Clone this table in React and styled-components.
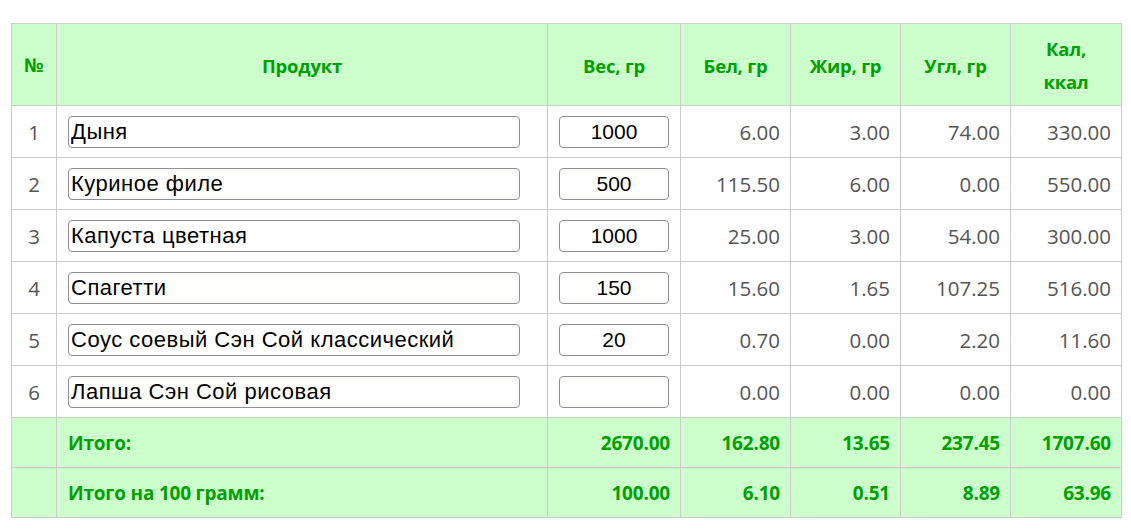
import React from 'react';
import styled, { createGlobalStyle } from 'styled-components';

const GlobalStyle = createGlobalStyle`
  body {
    margin: 0;
    background: #fff;
    font-family: "Open Sans", "Liberation Sans", sans-serif;
  }
`;

const Page = styled.div`
  padding: 23px 10px 0 11px;
`;

const Table = styled.table`
  border-collapse: collapse;
  table-layout: fixed;
  width: 1110px;
  font-size: 20.5px;
`;

const Col = styled.col`
  width: ${(p) => p.w}px;
`;

const HeadCell = styled.th`
  background: #ccffcc;
  color: #00a000;
  border: 1px solid #cccccc;
  font-size: 18.5px;
  font-weight: 700;
  line-height: 33px;
  padding: 8px ${(p) => (p.$wrap ? 22 : 8)}px 7px;
  text-align: center;
  vertical-align: middle;
  letter-spacing: -0.2px;
`;

const NumHead = styled(HeadCell)`
  padding-left: 0;
  padding-right: 0;
  font-size: 19px;
`;

const Row = styled.tr`
  height: 52px;
`;

const Cell = styled.td`
  border: 1px solid #cccccc;
  color: #555;
  padding: 0 10px;
  text-align: ${(p) => p.align || 'right'};
  vertical-align: middle;
`;

const InputCell = styled.td`
  border: 1px solid #cccccc;
  padding: 0 11px;
  vertical-align: middle;
`;

const TextInput = styled.input`
  display: block;
  box-sizing: border-box;
  width: ${(p) => p.w}px;
  height: 32px;
  margin: 0;
  padding: 0 2px;
  border: 1px solid #8f8f9d;
  border-radius: 4px;
  background: #fff;
  font-family: "Liberation Sans", Arial, sans-serif;
  font-size: ${(p) => p.size}px;
  letter-spacing: ${(p) => p.spacing || 0}px;
  color: #000;
  text-align: ${(p) => p.align || 'left'};
  outline: none;
`;

const TotalRow = styled.tr`
  height: 50px;
  background: #ccffcc;
`;

const TotalCell = styled.td`
  border: 1px solid #cccccc;
  color: #00a000;
  font-weight: 700;
  font-size: 19px;
  padding: 0 10px;
  text-align: ${(p) => p.align || 'right'};
  letter-spacing: -0.2px;
`;

const LabelCell = styled(TotalCell)`
  padding-left: 11px;
`;

const rows = [
  { name: 'Дыня', w: '1000', b: '6.00', f: '3.00', c: '74.00', k: '330.00' },
  { name: 'Куриное филе', w: '500', b: '115.50', f: '6.00', c: '0.00', k: '550.00' },
  { name: 'Капуста цветная', w: '1000', b: '25.00', f: '3.00', c: '54.00', k: '300.00' },
  { name: 'Спагетти', w: '150', b: '15.60', f: '1.65', c: '107.25', k: '516.00' },
  { name: 'Соус соевый Сэн Сой классический', w: '20', b: '0.70', f: '0.00', c: '2.20', k: '11.60' },
  { name: 'Лапша Сэн Сой рисовая', w: '', b: '0.00', f: '0.00', c: '0.00', k: '0.00' },
];

const totals = [
  { label: 'Итого:', w: '2670.00', b: '162.80', f: '13.65', c: '237.45', k: '1707.60' },
  { label: 'Итого на 100 грамм:', w: '100.00', b: '6.10', f: '0.51', c: '8.89', k: '63.96' },
];

const App = () => {
  return (
    <Page>
      <GlobalStyle />
      <Table>
        <colgroup>
          <Col w={45} />
          <Col w={491} />
          <Col w={133} />
          <Col w={110} />
          <Col w={110} />
          <Col w={110} />
          <Col w={111} />
        </colgroup>
        <thead>
          <tr>
            <NumHead>№</NumHead>
            <HeadCell>Продукт</HeadCell>
            <HeadCell>Вес, гр</HeadCell>
            <HeadCell>Бел, гр</HeadCell>
            <HeadCell>Жир, гр</HeadCell>
            <HeadCell>Угл, гр</HeadCell>
            <HeadCell $wrap>Кал, ккал</HeadCell>
          </tr>
        </thead>
        <tbody>
          {rows.map((r, i) => (
            <Row key={i}>
              <Cell align="center">{i + 1}</Cell>
              <InputCell>
                <TextInput type="text" w={452} size={22} spacing={0.5} defaultValue={r.name} />
              </InputCell>
              <InputCell>
                <TextInput type="text" w={110} size={21} align="center" defaultValue={r.w} />
              </InputCell>
              <Cell>{r.b}</Cell>
              <Cell>{r.f}</Cell>
              <Cell>{r.c}</Cell>
              <Cell>{r.k}</Cell>
            </Row>
          ))}
          {totals.map((t, i) => (
            <TotalRow key={i}>
              <TotalCell />
              <LabelCell align="left">{t.label}</LabelCell>
              <TotalCell>{t.w}</TotalCell>
              <TotalCell>{t.b}</TotalCell>
              <TotalCell>{t.f}</TotalCell>
              <TotalCell>{t.c}</TotalCell>
              <TotalCell>{t.k}</TotalCell>
            </TotalRow>
          ))}
        </tbody>
      </Table>
    </Page>
  );
};

export default App;
